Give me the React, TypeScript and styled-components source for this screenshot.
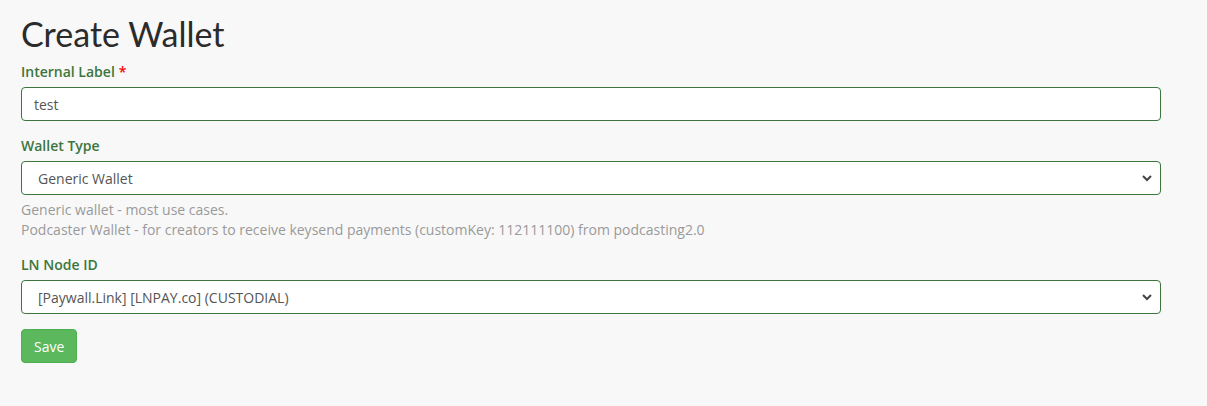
import React from 'react';
import styled, { createGlobalStyle } from 'styled-components';

const GlobalStyle = createGlobalStyle`
  html, body {
    margin: 0;
    padding: 0;
    background: #f8f8f8;
  }
  body {
    font-family: 'Open Sans', 'Liberation Sans', sans-serif;
    font-size: 14px;
    color: #333;
  }
`;

const Page = styled.div`
  padding: 14px 21px 40px 21px;
  width: 1140px;
`;

const Title = styled.h1`
  font-family: Lato, 'Open Sans', sans-serif;
  font-weight: 400;
  font-size: 34px;
  line-height: 40px;
  color: #2b2b2b;
  margin: 0 0 8px 0;
`;

const Form = styled.form`
  display: flex;
  flex-direction: column;
`;

const Group = styled.div`
  display: flex;
  flex-direction: column;
  margin-bottom: 15px;
`;

const Label = styled.label`
  font-weight: 600;
  font-size: 14px;
  line-height: 20px;
  color: #3c763d;
  margin-bottom: 5px;
`;

const Required = styled.span`
  color: #f00;
  margin-left: 4px;
`;

const TextInput = styled.input`
  box-sizing: border-box;
  height: 34px;
  width: 100%;
  padding: 6px 12px;
  font-family: inherit;
  font-size: 14px;
  color: #555;
  background: #fff;
  border: 1px solid #3c763d;
  border-radius: 4px;
  outline: none;
`;

const SelectWrap = styled.div`
  position: relative;
`;

const Select = styled.select`
  box-sizing: border-box;
  appearance: none;
  height: 34px;
  width: 100%;
  padding: 6px 16px;
  font-family: inherit;
  font-size: 14px;
  color: #555;
  background: #fff;
  border: 1px solid #3c763d;
  border-radius: 4px;
  outline: none;
`;

const Chevron = styled.svg`
  position: absolute;
  right: 8px;
  top: 13px;
  pointer-events: none;
`;

const Help = styled.p`
  margin: 5px 0 0 0;
  font-size: 14px;
  line-height: 20px;
  color: #9a9a9a;
`;

const SaveButton = styled.button`
  align-self: flex-start;
  height: 34px;
  padding: 6px 12px;
  font-family: inherit;
  font-size: 14px;
  color: #fff;
  background: #5cb85c;
  border: 1px solid #4cae4c;
  border-radius: 4px;
`;

const DropSelect = ({ value, options }: { value: string; options: string[] }) => (
  <SelectWrap>
    <Select defaultValue={value}>
      {options.map((o) => (
        <option key={o}>{o}</option>
      ))}
    </Select>
    <Chevron width="12" height="8" viewBox="0 0 12 8">
      <path d="M2 2 L6 6 L10 2" fill="none" stroke="#444" strokeWidth="2" />
    </Chevron>
  </SelectWrap>
);

export default function App() {
  return (
    <Page>
      <GlobalStyle />
      <Title>Create Wallet</Title>
      <Form onSubmit={(e) => e.preventDefault()}>
        <Group>
          <Label>
            Internal Label<Required>*</Required>
          </Label>
          <TextInput defaultValue="test" />
        </Group>
        <Group>
          <Label>Wallet Type</Label>
          <DropSelect value="Generic Wallet" options={['Generic Wallet', 'Podcaster Wallet']} />
          <Help>
            Generic wallet - most use cases.
            <br />
            Podcaster Wallet - for creators to receive keysend payments (customKey: 112111100) from podcasting2.0
          </Help>
        </Group>
        <Group>
          <Label>LN Node ID</Label>
          <DropSelect
            value="[Paywall.Link] [LNPAY.co] (CUSTODIAL)"
            options={['[Paywall.Link] [LNPAY.co] (CUSTODIAL)']}
          />
        </Group>
        <SaveButton type="submit">Save</SaveButton>
      </Form>
    </Page>
  );
}
